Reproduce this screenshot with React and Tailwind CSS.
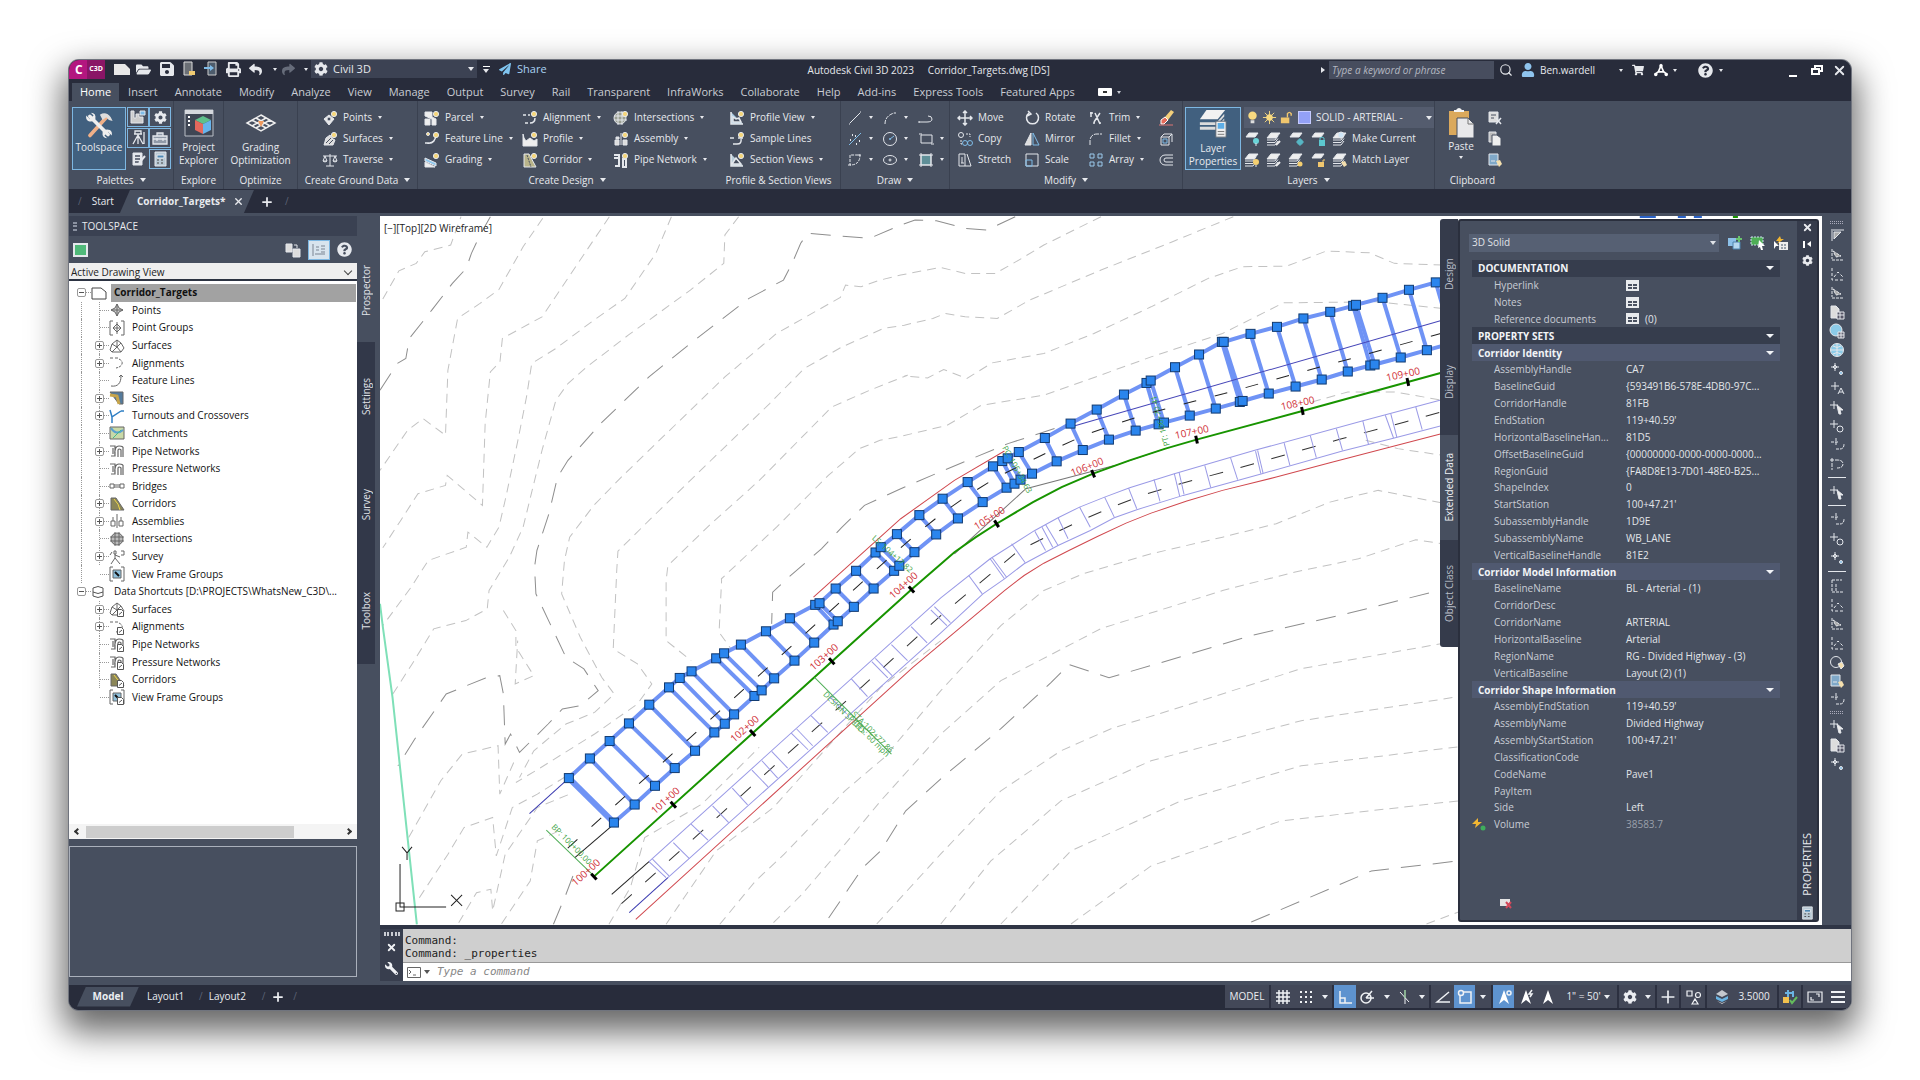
import React, { useState } from "react";
import {
  FaCog,
  FaFolderOpen,
  FaPaperPlane,
  FaPrint,
  FaQuestionCircle,
  FaReply,
  FaSave,
  FaShare,
  FaShoppingCart,
  FaUser,
  FaWrench,
} from "react-icons/fa";
import { Plus, Search, X } from "lucide-react";

const star = <circle cx="12" cy="4" r="2.6" fill="#f5d67a" />;
const badge = (
  <path d="M8.5 8.5h4l2 2v5h-6zM10 13.5l3-2.5" fill="#fff" stroke="#555" />
);
const sheets = (
  <>
    <path d="M5 2h9L10 7H1z" fill="#eee" />
    <path d="M1 9h8l3-4M1 11.500h8l3-4M1 14h8l3-4" />
  </>
);

// Small glyphs, all on a 16x16 box
const glyphs = {
  points: <><path d="M2 9l5-4 5 4-5 6z" fill="#e8e8e8" /><circle cx="7" cy="9" r="2" fill="#474f5f" />{star}</>,
  surfaces: <><path d="M2 14l2-7 4-3 3 4 2 1-2 5z" fill="#ddd" /><path d="M4 12l5-5M7 13l4-4" stroke="#474f5f" />{star}</>,
  traverse: <path d="M8 2v12M4 14h8M1 4h14M3 4L1 9h4zM13 4l-2 5h4zM1 9q2 2 4 0M11 9q2 2 4 0" />,
  parcel: <><path d="M1 2h7v5l4 2v6H8V9L1 6zM1 9h5v6H1z" fill="#eee" />{star}</>,
  featureLine: <><path d="M3 12c6 1 9-3 9-9M1 12h4M10 3h4" strokeWidth="1.500" /><circle cx="4" cy="3" r="1.500" fill="#f5d67a" />{star}</>,
  grading: <><path d="M1 6l11 5v3L1 9z" fill="#8fc8ee" /><path d="M1 10l10 5H1z" fill="#eee" />{star}</>,
  alignment: <><path d="M1 5h3M6 5h2M3 13h3M8 13q5 0 5-5" strokeWidth="1.500" />{star}</>,
  profile: <><path d="M1 3v12h14V8l-3 2-4-3-4 3-2-3z" fill="#eee" />{star}</>,
  corridor: <><path d="M2 2h5l7 13H2z" fill="#b9b48a" /><path d="M5 3l4 12" stroke="#474f5f" strokeDasharray="2 1" />{star}</>,
  intersections: <><circle cx="7" cy="8" r="6" fill="#9a9f92" /><path d="M5 1v14M9 1v14M1 6h13M1 10h13" />{star}</>,
  assembly: <><path d="M2 9h4v5H2zM8 2v12M10 9h4v5h-4zM3 6h3v2H3z" fill="#ddd" />{star}</>,
  pipe: <><path d="M1 3h5v11H2M5 6H1M10 7h3v8h-3z" strokeWidth="2" />{star}</>,
  profileView: <><path d="M2 2v12h12M4 12V7l3 2 3-1 2 4z" fill="#a9cbe4" strokeWidth="1.500" />{star}</>,
  sampleLines: <><path d="M1 7h4M9 7h5M4 13h4q5 0 4-5" strokeWidth="1.500" />{star}</>,
  sectionViews: <><path d="M2 2v12h12M3 12l4-6 5 6z" fill="#b8ccd8" strokeWidth="1.500" />{star}</>,
  line: <path d="M3 13L13 3M2 14h1M13 2h1" />,
  arc: <path d="M3 14q0-8 9-11M12 3h2" strokeDasharray="4 1" />,
  polyline: <path d="M1 12h8q5 0 5-3t-4-3M1 11v2" />,
  divide: <><path d="M2 14L14 2" stroke="#7fbce8" /><path d="M5 4h1M9 13h1M12 10h1M3 9h1M8 5h1" strokeWidth="1.800" /></>,
  circle: <><circle cx="8" cy="8" r="6.500" /><path d="M8 8l4-3M7 8h2M8 7v2" stroke="#7fbce8" /></>,
  rect: <path d="M3 4h11v8H3zM1 3h3M13 13h3" />,
  spline: <path d="M3 3v10q10 0 10-10zM1 13h4M11 3h4" strokeDasharray="3 1" />,
  ellipse: <><ellipse cx="8" cy="8" rx="6.500" ry="4.500" /><circle cx="8" cy="8" r="1" /></>,
  hatch: <><path d="M3 3h10v10H3z" fill="#5f8f98" /><path d="M1 3h14M1 13h14M3 1v14M13 1v14" /></>,
  move: <path d="M8 1v14M1 8h14M6 3l2-2 2 2M6 13l2 2 2-2M3 6L1 8l2 2M13 6l2 2-2 2" strokeWidth="1.500" />,
  copy: <><circle cx="4" cy="4" r="2.500" /><path d="M9 3h4v3M4 9v4h2" strokeDasharray="2 1" /><circle cx="8" cy="12" r="2.500" stroke="#7fbce8" /><circle cx="13" cy="12" r="2.500" stroke="#7fbce8" /></>,
  stretch: <path d="M2 2h6v12H2zM10 2l4 12H8M5 5v6M4 11h3" />,
  rotate: <path d="M5 3a6 6 0 1 0 7 0M4 1l3 3-4 2" strokeWidth="1.500" />,
  mirror: <><path d="M7 2v12H1z" fill="#ddd" /><path d="M9 2v12h6z" stroke="#7fbce8" /></>,
  scale: <><path d="M2 2h12v12H2z" /><path d="M2 8h6v6H2z" stroke="#7fbce8" /></>,
  trim: <path d="M2 3h3M7 3l5 11M12 3L6 12M3 2v5M5 13h2M11 13h2" strokeWidth="1.500" />,
  fillet: <path d="M2 14V9q1-6 7-6h5" strokeDasharray="5 1" />,
  array: <path d="M2 2h4v4H2zM10 2h4v4h-4zM2 10h4v4H2zM10 10h4v4h-4z" stroke="#9ccbee" />,
  erase: <><path d="M7 7l6-7 3 2-6 8z" fill="#f4cf7b" stroke="none" /><path d="M3 10l4-3 3 3-4 4H3z" fill="#e46b5a" stroke="#fff" /><path d="M1 15h14" stroke="#d77" /></>,
  explode: <><path d="M3 6h8v8H3zM6 3h8v8M3 6l3-3M11 6l3-3" /><path d="M5 8h4v4H5z" stroke="#7fbce8" /></>,
  offset: <path d="M15 3H7a5 5 0 0 0 0 10h8M15 6H8a2 2 0 0 0 0 4h7" />,
  bulb: <><circle cx="8" cy="6" r="4.500" fill="#f8d980" stroke="none" /><path d="M6 11h4v3H6z" fill="#ddd" stroke="none" /></>,
  sun: <><circle cx="8" cy="8" r="3.500" fill="#f8d980" stroke="none" /><path d="M8 1v14M1 8h14M3 3l10 10M13 3L3 13" stroke="#f8d980" /></>,
  unlock: <><path d="M2 8h9v6H2z" fill="#f0c66e" stroke="none" /><path d="M9 8V4q2-3 4 0v2" stroke="#f0c66e" strokeWidth="1.500" /></>,
  layerBulb: <><path d="M5 2h9l-3 4H2z" fill="#eee" /><circle cx="12" cy="10" r="3" fill="#6ad4d8" stroke="none" /><path d="M12 12v3" /></>,
  layerIso: <>{sheets}<path d="M10 14l4-4" stroke="#eee" strokeWidth="2" /></>,
  layerFreeze: <><path d="M5 2h9l-3 4H2z" fill="#eee" /><circle cx="12" cy="11" r="3" fill="#57b6c4" stroke="none" /><path d="M12 7v8M8 11h8" stroke="#57b6c4" /></>,
  layerLock: <><path d="M5 2h9l-3 4H2z" fill="#eee" /><path d="M9 9h6v6H9z" fill="#5cc8cf" stroke="none" /><path d="M10 9V7q2-2 4 0v2" stroke="#5cc8cf" /></>,
  layerCurrent: <>{sheets}<circle cx="9" cy="4" r="3" fill="#cfe6f7" /></>,
  layerOn: <>{sheets}<circle cx="12" cy="10" r="3" fill="#f5cf70" stroke="none" /><path d="M12 13v2" /></>,
  layerThaw: <>{sheets}<circle cx="12" cy="12" r="2.500" fill="#f5cf70" stroke="none" /></>,
  layerUnlock: <><path d="M5 2h9l-3 4H2z" fill="#eee" /><path d="M8 10h6v5H8z" fill="#f0c66e" stroke="none" /><path d="M13 10V8h2" stroke="#f0c66e" /></>,
  layerMatch: <>{sheets}<path d="M9 10l4-1 2 4-3 2z" fill="#f4dfae" stroke="none" /></>,
  cut: <><path d="M2 2h9v10H2z" fill="#ddd" /><path d="M4 5h5M4 8h3" stroke="#474f5f" /><path d="M9 8l5 6M14 8l-5 6" strokeWidth="1.500" /></>,
  copyClip: <><path d="M2 1h7v10H2z" fill="#bbb" /><path d="M5 4h5l4 3v8H5z" fill="#eee" stroke="#474f5f" /></>,
  pasteSpecial: <><path d="M2 2h9v11H2z" fill="#7fa8c8" /><path d="M4 9h4" /><path d="M9 9l4-1 2 4-3 3z" fill="#f4dfae" stroke="none" /></>,
  note: <><path d="M3 2h9v12H3z" fill="#e4e7ec" /><path d="M5 5h5M5 8h5M5 11h4" stroke="#474f5f" strokeWidth="1.500" /><path d="M9 12l6-7" strokeWidth="2" /></>,
  survey: <path d="M4 4h8M8 4v10M8 5L3 14M8 5l5 9M5 1h6v3H5zM14 2v12" strokeWidth="1.300" />,
  prospector: <><path d="M1 2v12h12V8H9V5H6v4H4V2z" fill="#ccc" /><path d="M10 2h5v4h-5z" fill="#7fbce8" /></>,
  toolbox: <path d="M1 6h14v8H1zM5 6V3h6v3M1 9h14M5 8v3M11 8v3" fill="#909aa8" strokeWidth="1.300" />,
  calc: <><path d="M3 1h11v14H3z" fill="#b8c8d4" /><path d="M5 4h7v3H5z" fill="#4d88b4" /><path d="M5 9h2M9 9h2M5 12h2M9 12h2" stroke="#444" /></>,
  sheet: <path d="M1 3h9l5 4v7H1z" fill="#fff" stroke="#444" />,
  tPoints: <><path d="M8 2l2 4 4 2-4 2-2 4-2-4-4-2 4-2z" fill="#ccc" /><path d="M8 2v12M2 8h12" /></>,
  tPointGroups: <path d="M4 1H1v14h3M12 1h3v14h-3M8 4l4 4-4 4-4-4zM8 2v12M4 8h8" />,
  tSurfaces: <path d="M1 12L3 6l5-4 4 3 3 5-3 4H3zM3 6l5 3 4-4M8 9l-5 5M8 9l4 5M8 2v7" />,
  tAlign: <path d="M1 3h3M6 3h3M10 4q4 2 3 5t-6 4" strokeDasharray="3 1" />,
  tFeature: <path d="M2 13c7 1 10-3 10-10M10 4l2-2 2 2" />,
  tSites: <><path d="M1 2h13v12h-4z" fill="#557b9c" /><path d="M1 5l7 1 2 8" stroke="#c7a54b" strokeWidth="3" /></>,
  tTurnouts: <path d="M3 15V9l9-6M3 9L1 2M12 3h3" stroke="#2f7fc4" strokeWidth="1.500" />,
  tCatch: <><path d="M1 2h14v12H1z" fill="#c9d9a8" /><path d="M2 3q5 8 12 2" stroke="#5aa0d0" strokeWidth="2" /><path d="M4 13l8-8" stroke="#4b8" /></>,
  tPipe: <path d="M1 3h5v10H2M6 13q-1-10 4-10t4 3v8M4 5v6M9 14V7q1-2 3 0v7" strokeWidth="1.200" />,
  tBridge: <path d="M1 6h4v4H1zM11 6h4v4h-4zM5 7h6M5 9h6" />,
  tCorridor: <><path d="M2 2h5l8 12H2z" fill="#8b8658" /><path d="M5 3q5 5 6 11" stroke="#f0d64c" /></>,
  tAssembly: <path d="M8 1v14M2 8h4v5H2zM10 8h4v5h-4zM4 4v4M12 4v4" />,
  tInter: <><circle cx="8" cy="8" r="6" fill="#bbb" /><path d="M6 1v14M10 1v14M1 6h14M1 10h14" /></>,
  tSurvey: <path d="M5 2h2v3H5zM6 5v4L2 15M6 9l5 6M6 6l5 2M12 2h3v4h-3M3 3L1 6" />,
  tFrame: <><path d="M4 1H1v14h3M12 1h3v14h-3" /><path d="M4 4h8v8H4z" fill="#8fc1dd" /><path d="M6 6l4 4" stroke="#111" strokeWidth="2" /></>,
  tData: <path d="M2 4q5-3 10 0v8q-5 3-10 0zM2 8q5 3 10 0" />,
  squad: <><path d="M1 2h6v8H1z" fill="#ddd" /><path d="M8 7h7v8H8z" fill="#ddd" /><path d="M9 3h3v3" /></>,
  grip: <path d="M2 2h13M3 3v10M5 4v7l7-7z" fill="#aaa" />,
  gripB: <path d="M3 2v10M3 13h12M4 4l8 5-5 1z" fill="#aaa" strokeDasharray="3 1" />,
  pageGrid: <><path d="M2 2h5l3 3v9H2z" fill="#ddd" /><path d="M8 8h7v7H8zM8 11h7M11 8v7" fill="#556" /></>,
  globe: <><circle cx="8" cy="8" r="6.500" fill="#8ccbe8" /><path d="M2 8h12M8 2v12M4 4q4 3 8 0M4 12q4-3 8 0" /></>,
  globeGrid: <><circle cx="7" cy="7" r="6" fill="#8ccbe8" /><path d="M9 9h6v6H9zM9 12h6M12 9v6" fill="#667" /></>,
  node: <><path d="M6 2v8M2 6h8M6 4l2 2-2 2-2-2z" /><circle cx="12" cy="12" r="1.500" fill="#7fbce8" /></>,
  nodeA: <path d="M6 2v8M2 6h8M9 14l3-6 3 6M10 12h4" />,
  nodeCursor: <><path d="M5 2v8M1 6h8" /><path d="M8 6l6 5-3 0 1 4-2 0-1-4z" fill="#eee" /></>,
  nodeZoom: <><path d="M5 2v8M1 6h8" /><circle cx="11" cy="11" r="3" /></>,
  hook: <path d="M3 2v12M1 4h7q6 0 6 4t-6 4" strokeDasharray="4 1" />,
  hookDots: <path d="M7 1v8M2 5h8M7 12h4q4 0 4-5" strokeDasharray="3 1" />,
  slope: <path d="M3 2v12h12M5 11l4-5 5 5" strokeDasharray="3 2" />,
  squareDots: <path d="M3 2h10M3 2v12h11M7 6v8" strokeDasharray="3 1" />,
  roundPen: <><circle cx="7" cy="8" r="5.500" /><path d="M9 10l4-2 2 4-3 3z" fill="#f4dfae" /></>,
};

function Glyph({ name, className = "h-4 w-4", color = "#e4e7ec" }) {
  return (
    <svg
      viewBox="0 0 16 16"
      className={`${className} shrink-0`}
      fill="none"
      stroke={color}
      aria-hidden="true"
    >
      {glyphs[name]}
    </svg>
  );
}

function Caret({ className = "border-x-[3px] border-t-[4px]" }) {
  return (
    <span
      className={`${className} inline-block h-0 w-0 shrink-0 border-x-transparent border-t-current`}
    />
  );
}

const menuTabs = [
  "Home", "Insert", "Annotate", "Modify", "Analyze", "View", "Manage", "Output", "Survey",
  "Rail", "Transparent", "InfraWorks", "Collaborate", "Help", "Add-ins", "Express Tools",
  "Featured Apps",
];

function TitleBar() {
  return (
    <header className="flex h-[23px] shrink-0 items-start bg-[#282c3b] text-[10px] text-[#e6e8ec]">
      <div className="flex h-[19px] w-[36px] items-center rounded-tl-lg bg-[#b3167f] text-white">
        <b className="pl-[6px] text-[12px]">C</b>
        <span className="ml-auto flex h-full w-[18px] items-center justify-center bg-[#8a1566] text-[7px] font-bold">
          C3D
        </span>
      </div>
      <div className="ml-[9px] flex h-[18px] items-center text-[15px]">
        <button className="w-[22px]" aria-label="New">
          <svg viewBox="0 0 16 16" className="h-4 w-4">
            <path d="M0 3h11l5 5v6H0z" fill="#e8e8e8" />
          </svg>
        </button>
        <button className="w-[23px]" aria-label="Open"><FaFolderOpen /></button>
        <button className="w-[22px] text-[16px]" aria-label="Save"><FaSave /></button>
        <button className="w-[23px]" aria-label="Open from web">
          <svg viewBox="0 0 16 16" className="h-4 w-4">
            <path d="M3 1h8v13H3z" fill="#6b6f75" stroke="#ddd" />
            <path d="M8 10h6v4H8z" fill="#efcb72" />
          </svg>
        </button>
        <button className="w-[22px]" aria-label="Save to web">
          <svg viewBox="0 0 16 16" className="h-4 w-4">
            <path d="M4 1h8v13H4z" fill="#4d5c6c" stroke="#ccc" />
            <path d="M0 6h6V4l4 3-4 3V8H0z" fill="#7fbce8" />
          </svg>
        </button>
        <button className="w-[23px]" aria-label="Plot"><FaPrint /></button>
        <button className="w-[18px] text-[13px]" aria-label="Undo"><FaReply /></button>
        <button className="w-[15px]" aria-label="Undo list"><Caret className="mb-1 border-x-[2px] border-t-[3px]" /></button>
        <button className="w-[18px] text-[13px] text-[#666c7a]" aria-label="Redo"><FaShare /></button>
        <button className="w-[11px]" aria-label="Redo list"><Caret className="mb-1 border-x-[2px] border-t-[3px]" /></button>
      </div>
      <button className="flex h-[18px] w-[166px] items-center bg-[#3c4253] px-[3px] text-[11px]">
        <FaCog className="text-[14px]" />
        <span className="ml-[5px] flex-1 text-left">Civil 3D</span>
        <Caret />
      </button>
      <button className="flex h-[18px] w-[18px] flex-col items-center justify-center gap-[2px]" aria-label="Customize">
        <span className="h-px w-[7px] bg-white" />
        <Caret />
      </button>
      <button className="ml-[4px] flex h-[18px] items-center gap-[6px] text-[11px] text-[#a9d2f3]">
        <FaPaperPlane className="text-[12px] text-[#7fc4ef]" />
        Share
      </button>
      <div className="ml-[261px] flex h-[20px] items-center gap-[14px] whitespace-nowrap">
        <span>Autodesk Civil 3D 2023</span>
        <span>Corridor_Targets.dwg [DS]</span>
      </div>
      <div className="ml-auto flex h-[20px] items-center">
        <span className="mr-[4px] h-0 w-0 border-y-[3px] border-l-[4px] border-y-transparent border-l-current" />
        <input
          aria-label="Search help"
          placeholder="Type a keyword or phrase"
          className="h-[18px] w-[165px] bg-[#474d5e] px-[3px] text-[10px] italic placeholder:text-[#b4b8c1]"
        />
        <button className="w-[24px]" aria-label="Search"><Search className="mx-auto h-[14px] w-[14px]" /></button>
        <FaUser className="mr-[5px] ml-[3px] text-[14px] text-[#8fc4ee]" />
        <button className="w-[92px] text-left">Ben.wardell<Caret className="ml-[24px] mb-[2px] border-x-[2px] border-t-[3px]" /></button>
        <button className="w-[22px]" aria-label="App store"><FaShoppingCart className="text-[12px]" /></button>
        <button className="flex w-[36px] items-center gap-[5px]" aria-label="Autodesk apps">
          <svg viewBox="0 0 16 16" className="h-[14px] w-[14px]" fill="none" stroke="#fff" strokeWidth="2">
            <path d="M8 3L5 10h6zM1 13l4-3M15 13l-4-3" />
            <circle cx="8" cy="3" r="2" fill="#fff" stroke="none" />
            <circle cx="2" cy="13" r="2" fill="#fff" stroke="none" />
            <circle cx="14" cy="13" r="2" fill="#fff" stroke="none" />
          </svg>
          <Caret className="border-x-[2px] border-t-[3px]" />
        </button>
        <button className="mr-[58px] ml-[8px] flex items-center gap-[6px]" aria-label="Help">
          <FaQuestionCircle className="text-[15px]" />
          <Caret className="border-x-[2px] border-t-[3px]" />
        </button>
        <button className="flex h-[14px] w-[24px] items-end justify-center" aria-label="Minimize"><span className="h-[2px] w-[8px] bg-white" /></button>
        <button className="w-[23px]" aria-label="Restore">
          <svg viewBox="0 0 12 12" className="mx-auto h-3 w-3" fill="none" stroke="#fff" strokeWidth="2">
            <path d="M4 4V2h7v5H9M1 5h7v5H1z" />
          </svg>
        </button>
        <button className="mr-px w-[22px]" aria-label="Close"><X className="mx-auto h-[15px] w-[15px]" strokeWidth={3} /></button>
      </div>
    </header>
  );
}

function Panel({ label, caret, className, children }) {
  return (
    <section className={`flex shrink-0 flex-col border-r border-[#3a4150] pt-[6px] ${className}`}>
      <div className="flex flex-1">{children}</div>
      <h2 className="flex h-[18px] items-center justify-center gap-[6px]">
        {label}
        {caret && <Caret />}
      </h2>
    </section>
  );
}

function Tools({ items, className }) {
  return (
    <div className={`flex flex-col ${className}`}>
      {items.map(([glyph, label, caret]) => (
        <button
          key={glyph}
          aria-label={label || glyph}
          className="flex h-[21px] items-center gap-[4px] whitespace-nowrap"
        >
          <Glyph name={glyph} />
          {label && <span className="ml-px">{label}</span>}
          {caret && <Caret className="ml-[2px] border-x-[2px] border-t-[3px]" />}
        </button>
      ))}
    </div>
  );
}

function Ribbon() {
  const small = "flex h-[20px] w-[22px] items-center justify-center";
  return (
    <div className="flex h-[88px] shrink-0 overflow-hidden bg-[#474f5f] text-[10px] text-[#e8eaee]">
      <Panel label="Palettes" caret className="w-[105px]">
        <div className="ml-[3px] flex gap-px">
          <button className="flex h-[63px] w-[54px] flex-col items-center border border-[#7db7e2] bg-[#41607f] pt-[3px]">
            <svg viewBox="0 0 32 32" className="h-[29px] w-[32px]" fill="none" strokeLinecap="round">
              <path d="M25 6L6 27" stroke="#f0b088" strokeWidth="4" />
              <path d="M17 4q7-4 12 3l2 4-4-1-3-3-4 3z" fill="#ddd" />
              <path d="M6 6l20 20" stroke="#eee" strokeWidth="4" />
              <path d="M2 5l4 4 4-4-3-3q6 0 5 7-3 4-8 2-3-2-2-6zM30 27l-4-4-4 4 3 3q-6 0-5-7 3-4 8-2 3 2 2 6z" fill="#eee" />
            </svg>
            Toolspace
          </button>
          <div className="grid grid-cols-2 content-start gap-y-px">
            <button aria-label="Prospector" className={`${small} border border-[#7db7e2]`}><Glyph name="prospector" /></button>
            <button aria-label="Settings" className={`${small} border border-[#7db7e2]`}><FaCog className="text-[13px]" /></button>
            <button aria-label="Survey" className={`${small} border border-[#7db7e2]`}><Glyph name="survey" /></button>
            <button aria-label="Toolbox" className={`${small} border border-[#7db7e2]`}><Glyph name="toolbox" /></button>
            <button aria-label="Panorama" className={small}><Glyph name="note" /></button>
            <button aria-label="Properties" className={`${small} border border-[#7db7e2]`}><Glyph name="calc" /></button>
          </div>
        </div>
      </Panel>
      <Panel label="Explore" className="w-[50px]">
        <button className="flex w-full flex-col items-center pt-[2px] leading-[13px]">
          <svg viewBox="0 0 30 28" className="mb-[4px] h-[28px] w-[30px]">
            <path d="M1 1h28v26H1z" fill="#3f4654" stroke="#b9bec6" />
            <path d="M1 1h28v4H1z" fill="#d5d8dd" />
            <path d="M4 8h2M4 12h2M4 16h2" stroke="#fff" strokeWidth="2" />
            <path d="M11 11l8-4 8 4-8 4z" fill="#5fc08c" />
            <path d="M11 11l8 4v10l-8-4z" fill="#e4685c" />
            <path d="M27 11l-8 4v10l8-4z" fill="#67b4ec" />
          </svg>
          Project
          <br />
          Explorer
        </button>
      </Panel>
      <Panel label="Optimize" className="w-[74px]">
        <button className="flex w-full flex-col items-center pt-[2px] leading-[13px]">
          <svg viewBox="0 0 32 28" className="mb-[4px] h-[28px] w-[32px]" fill="none" stroke="#eee" strokeWidth="1.500">
            <path d="M16 6l14 8-14 8-14-8zM11 9l14 8M7 11l14 8M21 9L7 17M25 11l-14 8" />
            <path d="M13 12h6l-3 6z" fill="#f09a5e" stroke="none" />
          </svg>
          Grading
          <br />
          Optimization
        </button>
      </Panel>
      <Panel label="Create Ground Data" caret className="w-[120px]">
        <Tools className="ml-[24px]" items={[["points", "Points", 1], ["surfaces", "Surfaces", 1], ["traverse", "Traverse", 1]]} />
      </Panel>
      <Panel label="Create Design" caret className="w-[299px] border-transparent">
        <Tools className="ml-[6px] w-[98px]" items={[["parcel", "Parcel", 1], ["featureLine", "Feature Line", 1], ["grading", "Grading", 1]]} />
        <Tools className="w-[91px]" items={[["alignment", "Alignment", 1], ["profile", "Profile", 1], ["corridor", "Corridor", 1]]} />
        <Tools items={[["intersections", "Intersections", 1], ["assembly", "Assembly", 1], ["pipe", "Pipe Network", 1]]} />
      </Panel>
      <Panel label="Profile & Section Views" className="w-[124px]">
        <Tools className="ml-[12px]" items={[["profileView", "Profile View", 1], ["sampleLines", "Sample Lines"], ["sectionViews", "Section Views", 1]]} />
      </Panel>
      <Panel label="Draw" caret className="w-[109px]">
        <Tools className="ml-[6px] w-[35px]" items={[["line", "", 1], ["divide", "", 1], ["spline", "", 1]]} />
        <Tools className="w-[36px]" items={[["arc", "", 1], ["circle", "", 1], ["ellipse", "", 1]]} />
        <Tools items={[["polyline"], ["rect", "", 1], ["hatch", "", 1]]} />
      </Panel>
      <Panel label="Modify" caret className="w-[233px]">
        <Tools className="ml-[7px] w-[67px]" items={[["move", "Move"], ["copy", "Copy"], ["stretch", "Stretch"]]} />
        <Tools className="w-[64px]" items={[["rotate", "Rotate"], ["mirror", "Mirror"], ["scale", "Scale"]]} />
        <Tools className="w-[70px]" items={[["trim", "Trim", 1], ["fillet", "Fillet", 1], ["array", "Array", 1]]} />
        <Tools items={[["erase"], ["explode"], ["offset"]]} />
      </Panel>
      <Panel label="Layers" caret className="w-[252px]">
        <button className="ml-[2px] flex h-[63px] w-[56px] flex-col items-center border border-[#7db7e2] bg-[#41607f] pt-px leading-[13px]">
          <svg viewBox="0 0 32 32" className="mb-[3px] h-[30px] w-[32px]">
            <path d="M9 1h20l-8 10H2z" fill="#f2f2f2" />
            <path d="M2 14h18l8-9v3l-8 9H2zM2 19h18l8-9v3l-8 9H2z" fill="#dcdcdc" />
            <path d="M19 13h11v17H19z" fill="#eee" stroke="#5b6470" />
            <path d="M21 15h7v6h-7z" fill="#5eaee6" />
            <path d="M21 24h7M21 27h7" stroke="#777" />
          </svg>
          Layer
          <br />
          Properties
        </button>
        <div className="ml-[3px] flex flex-col">
          <button className="flex h-[21px] w-[190px] items-center gap-[2px] bg-[#545c6e] pr-[2px] pl-px">
            <Glyph name="bulb" className="h-[15px] w-[15px]" />
            <Glyph name="sun" className="h-[15px] w-[15px]" />
            <Glyph name="unlock" className="h-[15px] w-[15px]" />
            <span className="ml-[2px] h-[13px] w-[13px] border border-[#c5cbff] bg-[#93a1f7]" />
            <span className="ml-[3px] flex-1 text-left whitespace-nowrap">SOLID - ARTERIAL -</span>
            <Caret />
          </button>
          <div className="flex h-[21px] items-center gap-[6px]">
            <Glyph name="layerBulb" /><Glyph name="layerIso" /><Glyph name="layerFreeze" /><Glyph name="layerLock" />
            <button className="flex items-center gap-[4px] whitespace-nowrap"><Glyph name="layerCurrent" />Make Current</button>
          </div>
          <div className="flex h-[21px] items-center gap-[6px]">
            <Glyph name="layerOn" /><Glyph name="layerIso" /><Glyph name="layerThaw" /><Glyph name="layerUnlock" />
            <button className="flex items-center gap-[4px] whitespace-nowrap"><Glyph name="layerMatch" />Match Layer</button>
          </div>
        </div>
      </Panel>
      <Panel label="Clipboard" className="w-[76px] border-transparent">
        <button className="ml-[8px] flex w-[36px] flex-col items-center">
          <svg viewBox="0 0 28 32" className="h-[32px] w-[28px]">
            <path d="M2 4h20v24H2z" fill="#dba95c" />
            <path d="M7 5h10V3h-2q-3-4-6 0H7z" fill="#f4f4f4" />
            <path d="M10 11h11l6 6v14H10z" fill="#e8e8ea" stroke="#474f5f" />
            <path d="M21 11v6h6" fill="none" stroke="#777" />
          </svg>
          Paste
          <Caret className="mt-[2px] border-x-[2px] border-t-[3px]" />
        </button>
        <Tools className="ml-[8px]" items={[["cut"], ["copyClip"], ["pasteSpecial"]]} />
      </Panel>
    </div>
  );
}

function DocumentTabs() {
  return (
    <nav className="flex h-[24px] shrink-0 items-center bg-[#282c3b] pt-px text-[10px] text-[#e8eaee]">
      <span className="ml-[9px] text-[#5c6374]">/</span>
      <button className="ml-[10px]">Start</button>
      <div className="ml-[6px] flex h-[23px] w-[134px] items-center bg-[#474f5f] pl-[17px] [clip-path:polygon(10px_0,100%_0,calc(100%-10px)_100%,0_100%)]">
        <button className="font-bold">Corridor_Targets*</button>
        <button aria-label="Close drawing" className="ml-[7px]"><X className="h-[11px] w-[11px]" strokeWidth={3} /></button>
      </div>
      <button aria-label="New drawing" className="ml-[6px]"><Plus className="h-[14px] w-[14px]" strokeWidth={3} /></button>
      <span className="ml-[11px] text-[#5c6374]">/</span>
    </nav>
  );
}

// glyph, label, expandable
const drawingItems = [
  ["tPoints", "Points"],
  ["tPointGroups", "Point Groups"],
  ["tSurfaces", "Surfaces", 1],
  ["tAlign", "Alignments", 1],
  ["tFeature", "Feature Lines"],
  ["tSites", "Sites", 1],
  ["tTurnouts", "Turnouts and Crossovers", 1],
  ["tCatch", "Catchments"],
  ["tPipe", "Pipe Networks", 1],
  ["tPipe", "Pressure Networks"],
  ["tBridge", "Bridges"],
  ["tCorridor", "Corridors", 1],
  ["tAssembly", "Assemblies", 1],
  ["tInter", "Intersections"],
  ["tSurvey", "Survey", 1],
  ["tFrame", "View Frame Groups"],
];
const shortcutItems = [
  ["tSurfaces", "Surfaces", 1],
  ["tAlign", "Alignments", 1],
  ["tPipe", "Pipe Networks"],
  ["tPipe", "Pressure Networks"],
  ["tCorridor", "Corridors"],
  ["tFrame", "View Frame Groups"],
];

function Expander({ open }) {
  return (
    <span className="relative h-[9px] w-[9px] shrink-0 rounded-[2px] border border-[#9a9a9a] bg-white">
      <span className="absolute top-[3px] left-px h-px w-[5px] bg-[#555]" />
      {!open && <span className="absolute top-px left-[3px] h-[5px] w-px bg-[#555]" />}
    </span>
  );
}

function RootNode({ glyph, label, selected }) {
  return (
    <li className="flex items-center">
      <span className="ml-[8px] flex"><Expander open /></span>
      <span className="w-[5px] border-t border-dotted border-[#999]" />
      <Glyph name={glyph} color="#555" />
      <span
        className={`ml-[4px] flex flex-1 items-center self-stretch truncate pl-[3px] ${
          selected ? "bg-[#a2a2a2] font-bold" : ""
        }`}
      >
        {label}
      </span>
    </li>
  );
}

function ChildNode({ item, inner, last, shared }) {
  const [glyph, label, expandable] = item;
  return (
    <li className="flex items-center">
      <span className={`ml-[12px] w-[18px] self-stretch border-l border-dotted ${inner ? "border-[#999]" : "border-transparent"}`} />
      <span className={`flex w-[10px] items-center self-stretch border-l border-dotted ${last ? "border-transparent" : "border-[#999]"}`}>
        {expandable && <span className="-ml-[5px] flex"><Expander /></span>}
        <span className="flex-1 border-t border-dotted border-[#999]" />
      </span>
      <span className="relative flex">
        <Glyph name={glyph} color="#666" />
        {shared && (
          <svg viewBox="0 0 16 16" className="absolute inset-0 h-4 w-4">{badge}</svg>
        )}
      </span>
      <span className="ml-[7px]">{label}</span>
    </li>
  );
}

function Toolspace() {
  const [tab, setTab] = useState("Prospector");
  return (
    <aside className="flex w-[311px] shrink-0 bg-[#474f5f] text-[10px]">
      <div className="flex w-[288px] flex-col">
        <div className="flex h-[20px] items-center gap-[5px] bg-[#3a4152] pl-[4px] text-[#e8eaee]">
          <span className="h-[9px] w-[4px] border-x-2 border-dotted border-[#8a91a0]" />
          TOOLSPACE
        </div>
        <div className="flex h-[27px] items-center pr-[5px] pl-[4px]">
          <button aria-label="Drawing" className="h-[14px] w-[15px] border-2 border-[#e4e8ec] bg-[#4fb979]" />
          <button aria-label="Panorama" className="ml-auto"><Glyph name="squad" /></button>
          <button aria-label="Preview" className="ml-[7px] flex h-[20px] w-[22px] items-center justify-center border border-[#7db7e2] bg-[#d8e4ee]">
            <svg viewBox="0 0 16 16" className="h-4 w-4" fill="none" stroke="#7b8492">
              <path d="M2 2v12M5 5h3M5 8h3M10 4h4M10 7h4M10 10h4M4 12h10" />
            </svg>
          </button>
          <button aria-label="Help" className="ml-[7px]"><FaQuestionCircle className="text-[15px] text-[#e6e9ee]" /></button>
        </div>
        <select
          aria-label="View"
          className="h-[18px] w-full appearance-none bg-[#efefef] pl-[2px] text-[10px] text-[#222]"
        >
          <option>Active Drawing View</option>
        </select>
        <div className="-mt-[13px] mb-[5px] mr-[6px] ml-auto h-[6px] w-[6px] rotate-45 border-r border-b border-[#444]" />
        <div className="flex flex-1 flex-col border-t-2 border-[#2c3342] bg-white">
          <ul className="mt-[3px] grid h-[422px] auto-rows-fr pr-px text-[#111]">
            <RootNode glyph="sheet" label="Corridor_Targets" selected />
            {drawingItems.map((item, i) => (
              <ChildNode key={item[1]} item={item} inner last={i === drawingItems.length - 1} />
            ))}
            <RootNode glyph="tData" label="Data Shortcuts [D:\PROJECTS\WhatsNew_C3D\..." />
            {shortcutItems.map((item, i) => (
              <ChildNode key={item[1]} item={item} shared last={i === shortcutItems.length - 1} />
            ))}
          </ul>
          <div className="mt-auto flex h-[15px] items-center bg-[#f4f4f4] px-[6px] text-[#333]">
            <span className="h-[5px] w-[5px] rotate-45 border-b-2 border-l-2 border-[#333]" />
            <span className="ml-[6px] h-[12px] w-[208px] bg-[#cdcdcd]" />
            <span className="ml-auto h-[5px] w-[5px] rotate-45 border-t-2 border-r-2 border-[#333]" />
          </div>
        </div>
        <div className="mt-[7px] mb-[8px] h-[131px] border border-[#aab0bb]" />
      </div>
      <div className="flex h-[448px] w-[18px] flex-col bg-[#323849] text-[#e0e3e8]">
        {[["Prospector", "h-[126px]"], ["Settings", "h-[110px]"], ["Survey", "h-[106px]"], ["Toolbox", "h-[106px]"]].map(([name, size]) => (
          <button
            key={name}
            onClick={() => setTab(name)}
            className={`${size} flex items-center justify-center ${tab === name ? "bg-[#474f5f] pt-[24px]" : ""}`}
          >
            <span className="rotate-180 [writing-mode:vertical-rl]">{name}</span>
          </button>
        ))}
      </div>
    </aside>
  );
}

const sheet = (ox, oy, kx, ky = 3) => (list) =>
  list.split(" ").map((pair) => {
    const [x, y] = pair.split(",").map(Number);
    return [Math.round((ox + x / kx) * 10) / 10, Math.round((oy + y / ky) * 10) / 10];
  });
const north = sheet(380, 210, 2.904);
const east = sheet(900, 210, 2.8);
const south = sheet(380, 560, 2.8);
const site = sheet(0, 0, 1, 1);

const minorContours = [
  north("8,267 55,182 105,160 130,125 205,105 235,20"),
  north("472,25 415,110 345,238 290,280 225,325 197,480 190,675 125,625 80,660 40,720 0,780"),
  north("665,20 600,120 470,320 355,385 348,455 320,485 305,640 297,885 195,795 190,825 110,850 60,930 8,1012"),
  north("845,20 800,130 710,265 620,330 510,415 440,460 425,560 400,690 365,860 345,950 310,1010 255,965 250,1010 140,1050 90,1130 8,1245"),
  [...north("1040,20 1000,75 997,160 900,240 720,375 600,470 545,520 510,570 470,720 415,950 375,1040"), ...south("305,90 300,145 240,180 150,205 90,310 30,410")],
  [...east("560,20 400,105 330,150 265,190 180,190 110,172 0,195"), ...north("1450,210 1395,230 1350,225 1335,262 1150,370 1000,500 850,650 700,800 620,885 550,980 535,1050"), ...south("508,100 560,230 620,350 655,400 600,455 520,490 430,570 390,650")],
  [...east("930,20 760,95 560,180 360,270 270,325 180,320 125,310 90,325 10,345"), ...north("1460,355 1340,410 1230,475 1130,580 900,810 790,920 690,1022"), ...south("662,30 652,265 720,310 760,370 720,430 600,520 450,620 380,665")],
  [...east("1515,165 1380,160 1310,128 1190,123 1080,168 955,170 860,205 700,290 540,370 400,430 255,458 185,505 120,478 75,503 10,497"), ...north("1530,495 1420,540 1310,590 1100,810 960,940 835,1065"), ...south("800,60 800,240 870,300")],
  [...east("1515,295 1330,275 1070,278 900,370 700,440 545,500 400,555 225,585 130,645 0,678"), ...north("1450,690 1390,715 1300,795 1150,950 990,1105"), ...south("955,60 948,215 985,270")],
  east("1150,575 1250,545 1380,545 1515,570"),
  east("1300,690 1390,715 1515,735"),
  [...south("950,1090 1050,960 1130,880 1300,690 1410,590"), ...site("940,690 1000,625"), ...east("400,1140 510,1090 700,1030 900,980 1050,940 1200,875 1335,840 1515,878")],
  [...south("1100,1085 1180,1000 1300,850 1400,720 1568,520"), ...site("1000,680 1100,628"), ...east("900,1140 1100,1085 1280,1045 1440,988 1515,1000")],
  south("345,150 380,210 380,260 430,345 378,370 385,240"),
  south("80,830 170,660 230,580 330,555 335,700 380,590"),
  south("110,1010 190,880 235,800 315,770 325,885 370,740 440,700 560,620"),
  south("220,1085 270,995 310,985 315,1050 350,880 440,740 530,700"),
  south("340,1088 420,960 440,840 500,810"),
  south("640,1090 700,980 740,830 900,730 1060,560"),
  south("800,1090 850,1010 940,870 1100,740 1250,560 1400,380 1568,240"),
  site("876,923 940,853 1000,790 1060,750 1110,728 1200,700 1300,668 1457,640"),
  site("940,923 990,860 1060,800 1150,760 1300,720 1457,696"),
  site("1000,923 1070,850 1180,800 1300,765 1457,746"),
  site("1070,923 1150,865 1280,820 1457,800"),
  site("1425,923 1457,911"),
];
const majorContours = [
  north("0,540 50,460 75,445 85,385 150,300 210,220 250,175 265,130 290,75 320,20"),
  [...east("320,20 242,60 180,55 100,32 40,30"), ...north("1510,45 1420,85 1330,78 1240,70 1220,100 1195,160 1170,210 1070,265 900,400 780,500 640,640 545,750 515,800 490,910 455,1020"), ...south("432,20 436,100 520,290 570,325 610,390 560,435 510,445 470,490 390,575 365,520 350,550 345,400 335,345 295,352 185,400 100,530 50,615")],
  [...east("430,655 300,700 120,780 0,835"), ...north("1405,885 1340,950 1280,1015 1180,1105"), ...south("1098,95 1095,190")],
  south("485,1090 520,1000 545,930"),
  site("828,917 862,867 880,850 905,810 940,778 1000,728 1050,682 1068,664 1108,677 1160,662 1250,635 1350,612 1457,585"),
  site("1250,921 1300,900 1370,870 1457,860"),
];

// Matching top and bottom grips of every selected corridor slice
const grips = [
  [south, "528,652 587,593 642,541 696,488 753,432 808,380 838,352 871,332 940,293 962,278 1009,252 1079,212 1146,173 1217,133 1229,128 1274,84 1331,31",
    "654,785 712,731 769,675 824,622 881,570 935,515 964,489 990,461 1047,406 1067,389 1102,353 1159,300 1214,246 1268,192 1280,182 1325,139 1380,84"],
  [north, "1437,1026 1452,1010 1499,971", "1491,1081 1506,1066 1550,1025"],
  [east, "52,914 117,865 187,815 258,768 284,752 299,744 330,725 403,683 475,640 548,598 624,553 687,518 699,511 767,471 834,433 898,395 903,395 978,371 1052,350 1126,325 1201,305 1265,287 1273,284 1347,263 1421,239 1496,217 1570,196",
    "99,972 160,924 229,875 296,832 318,820 335,808 367,790 436,753 509,719 582,688 657,661 721,642 736,637 808,616 881,595 948,575 956,572 1029,550 1104,529 1177,508 1250,484 1313,466 1325,463 1398,442 1471,420 1545,398 1620,378"],
];
const topGrips = grips.flatMap(([place, top]) => place(top));
const bottomGrips = grips.flatMap(([place, , bottom]) => place(bottom));

const laneLines = [
  ...["752,902 800,950", "762,895 808,945", "820,845 865,893", "870,790 917,838", "930,735 975,785", "985,682 1028,732",
    "1040,628 1085,678", "1068,600 1112,652", "1095,572 1140,622", "1150,517 1197,567", "1165,505 1210,555", "1205,465 1252,515",
    "1260,410 1305,460", "1318,355 1363,408", "1375,303 1420,352", "1385,293 1432,345", "1430,252 1475,300", "1485,198 1530,247",
    "1540,148 1585,195", "1550,138 1595,186"].map(south),
  ...["190,1095 228,1150", "250,1045 290,1105", "256,1042 296,1100", "310,1000 348,1057", "375,962 405,1020", "395,950 425,1010",
    "405,942 440,1005", "440,922 468,985", "500,890 530,950", "570,860 597,920", "637,833 660,895", "708,807 725,873", "765,790 780,858",
    "778,785 792,852", "850,765 867,832", "922,742 942,808", "992,722 1007,790", "998,720 1013,788", "1072,698 1088,765",
    "1145,675 1162,742", "1218,655 1235,720", "1292,632 1308,702", "1355,615 1378,683", "1370,610 1387,680", "1440,590 1458,658"].map(east),
];
const upperLaneEdge = [...south("752,902 1568,112"), ...east("250,1045 375,960 440,922 500,890 570,860 640,832 765,790 990,720 1290,632 1560,555")];
const lowerLaneEdge = [...south("805,950 1568,217"), ...east("230,1150 290,1105 345,1060 440,1005 530,960 597,922 660,898 790,855 1010,790 1235,722 1380,683 1560,633")];
const laneCentre = [...south("675,1028 1568,165"), ...east("330,1020 425,970 505,930 590,890 675,855 765,825 965,767 1230,686 1410,635 1560,590")];
const widenedCentre = [...south("525,862 1405,10"), ...east("50,965 120,905 195,850 270,800 355,755 438,712 520,672 605,640 697,608 820,573 905,550 1078,498 1260,445 1433,393 1560,355")];
const baseline = [...south("598,947 1486,87"), ...east("150,1025 210,980 268,940 370,875 450,830 538,790 640,750 740,715 827,688 1123,602 1418,515 1560,473")];
const outerEdge = [...south("715,1075 1490,320"), ...east("290,1140 345,1095 400,1058 470,1020 550,978 630,938 700,908 800,872 900,840 1050,800 1200,757 1560,657")];
const innerEdge = [...south("1212,110"), ...east("0,925 150,810 290,722")];
const stations = [
  ["100+00", south("598,947"), -42], ["101+00", south("820,732"), -42], ["102+00", south("1042,517"), -42],
  ["103+00", south("1263,302"), -42], ["104+00", south("1486,87"), -42], ["105+00", east("268,940"), -32],
  ["106+00", east("538,790"), -22], ["107+00", east("827,688"), -12], ["108+00", east("1123,602"), -12],
  ["109+00", east("1418,515"), -12],
];
const callouts = [
  ["BP: 100+00.00", south("478,800"), 45],
  ["DESIGN SPEED", south("1238,402"), 45],
  ["STA:102+77.86", south("1318,462"), 45],
  ["DES: 60 mph", south("1322,490"), 45],
  ["LS: 104+17.82", north("1425,985"), 42],
  ["PC: 105+34.63", east("283,712"), 61],
  ["PT: 106+70.41", east("752,705"), -105],
];

const Line = ({ points, ...rest }) => (
  <polyline points={points.map((p) => p.join(",")).join(" ")} fill="none" {...rest} />
);

function Drawing() {
  return (
    <svg
      viewBox="380 216 1442 708"
      preserveAspectRatio="xMinYMin slice"
      className="h-full w-full bg-white font-['Open_Sans',sans-serif]"
      role="img"
      aria-label="Corridor plan"
    >
      {minorContours.map((points, i) => (
        <Line key={i} points={points} stroke="#c2c2c2" strokeDasharray="9 6" />
      ))}
      {majorContours.map((points, i) => (
        <Line key={i} points={points} stroke="#8e8e8e" strokeDasharray="20 12" />
      ))}
      <Line points={south("0,130 8,200 35,410 103,1090")} stroke="#7fe0b8" strokeWidth="2" />

      <Line points={laneCentre} stroke="#333" strokeDasharray="14 18" />
      {laneLines.map((points, i) => (
        <Line key={i} points={points} stroke="#9a9ae6" />
      ))}
      <Line points={upperLaneEdge} stroke="#9a9ae6" />
      <Line points={lowerLaneEdge} stroke="#9a9ae6" />
      <Line points={outerEdge} stroke="#d0484e" />
      <Line points={innerEdge} stroke="#d0484e" />
      <Line points={south("648,1000 752,902")} stroke="#222" />
      <Line points={south("697,1055 805,950")} stroke="#3a3ab0" />
      <Line points={south("418,758 528,652")} stroke="#3a3ab0" />
      <Line points={south("545,890 654,790")} stroke="#222" />

      {topGrips.map((top, i) => (
        <Line key={i} points={[top, bottomGrips[i]]} stroke="#6f93f5" strokeWidth={i === 0 ? 6 : 4} />
      ))}
      <Line points={topGrips} stroke="#6f93f5" strokeWidth="4" />
      <Line points={bottomGrips} stroke="#6f93f5" strokeWidth="4" />
      <Line points={widenedCentre} stroke="#222" strokeDasharray="13 19" />
      <Line points={east("475,650 1560,316")} stroke="#4646b8" />
      <Line points={east("150,1030 350,835 600,765 740,715")} stroke="#777" />
      {[...topGrips, ...bottomGrips].map(([x, y], i) => (
        <rect key={i} x={x - 4.5} y={y - 4.5} width="9" height="9" fill="#2a85ee" stroke="#123a70" />
      ))}

      <Line points={baseline} stroke="#189400" strokeWidth="2" />
      <Line points={south("1215,350 1430,580")} stroke="#4fae57" />
      <Line points={south("465,808 600,947")} stroke="#4fae57" />
      {stations.map(([label, [[x, y]], angle]) => (
        <g key={label} transform={`translate(${x} ${y}) rotate(${angle})`}>
          <rect x="-1.500" y="-4" width="3" height="8" fill="#000" />
          <text x="-3" y="-5" textAnchor="middle" fontSize="10" fill="#cf3038">{label}</text>
        </g>
      ))}
      {callouts.map(([label, [[x, y]], angle]) => (
        <text key={label} transform={`translate(${x} ${y}) rotate(${angle})`} fontSize="8" fill="#3fa548">
          {label}
        </text>
      ))}

      <path d="M400 863V906H446M396 902h8v8h-8z" fill="none" stroke="#222" />
      <path d="M402 846l5 6 5-6M407 852v7M451 894l11 11M462 894l-11 11" fill="none" stroke="#222" />
      <path d="M1638 217h16M1676 217h8M1692 217h8" stroke="#2a62c8" strokeWidth="2" />
      <path d="M1731 217h5" stroke="#189400" strokeWidth="2" />
    </svg>
  );
}

const propertyRows = [
  ["group", "DOCUMENTATION"],
  ["row", "Hyperlink", "", "sheet"],
  ["row", "Notes", "", "sheet"],
  ["row", "Reference documents", "(0)", "sheet"],
  ["group", "PROPERTY SETS"],
  ["set", "Corridor Identity"],
  ["row", "AssemblyHandle", "CA7"],
  ["row", "BaselineGuid", "{593491B6-578E-4DB0-97C..."],
  ["row", "CorridorHandle", "81FB"],
  ["row", "EndStation", "119+40.59'"],
  ["row", "HorizontalBaselineHan...", "81D5"],
  ["row", "OffsetBaselineGuid", "{00000000-0000-0000-0000..."],
  ["row", "RegionGuid", "{FA8D8E13-7D01-48E0-B25..."],
  ["row", "ShapeIndex", "0"],
  ["row", "StartStation", "100+47.21'"],
  ["row", "SubassemblyHandle", "1D9E"],
  ["row", "SubassemblyName", "WB_LANE"],
  ["row", "VerticalBaselineHandle", "81E2"],
  ["set", "Corridor Model Information"],
  ["row", "BaselineName", "BL - Arterial - (1)"],
  ["row", "CorridorDesc", ""],
  ["row", "CorridorName", "ARTERIAL"],
  ["row", "HorizontalBaseline", "Arterial"],
  ["row", "RegionName", "RG - Divided Highway - (3)"],
  ["row", "VerticalBaseline", "Layout (2) (1)"],
  ["set", "Corridor Shape Information"],
  ["row", "AssemblyEndStation", "119+40.59'"],
  ["row", "AssemblyName", "Divided Highway"],
  ["row", "AssemblyStartStation", "100+47.21'"],
  ["row", "ClassificationCode", ""],
  ["row", "CodeName", "Pave1"],
  ["row", "PayItem", ""],
  ["row", "Side", "Left"],
  ["row", "Volume", "38583.7", "bolt"],
];

function PropertyRow({ row }) {
  const [kind, name, value, mark] = row;
  if (kind !== "row") {
    return (
      <tr className={kind === "group" ? "bg-[#363d4d]" : "bg-[#505970]"}>
        <th colSpan={3} className="p-0 pr-[6px] pl-[6px] text-left font-bold text-[#f2f4f7]">
          <span className="flex items-center justify-between">
            {name}
            <Caret className="border-x-[4px] border-t-[4px]" />
          </span>
        </th>
      </tr>
    );
  }
  return (
    <tr>
      <td className="w-[22px] p-0">
        {mark === "bolt" && (
          <svg viewBox="0 0 14 14" className="h-[14px] w-[14px]">
            <path d="M6 1L0 7h4l-1 4 7-6H6z" fill="#f2b632" />
            <circle cx="11" cy="11" r="2.500" fill="#3fae5c" />
          </svg>
        )}
      </td>
      <td className="w-[132px] p-0 whitespace-nowrap text-[#c9cdd5]">{name}</td>
      <td className={`p-0 whitespace-nowrap ${mark === "bolt" ? "text-[#9aa0ab]" : "text-[#e3e6ea]"}`}>
        {mark === "sheet" ? (
          <span className="flex items-center gap-[6px]">
            <svg viewBox="0 0 13 11" className="h-[11px] w-[13px]">
              <path d="M0 0h13v11H0z" fill="#e9ebee" />
              <path d="M2 5h4M7 5h4M2 8h4M7 8h4" stroke="#4a5160" strokeWidth="2" />
            </svg>
            {value}
          </span>
        ) : (
          value
        )}
      </td>
    </tr>
  );
}

function PropertiesPalette() {
  const [tab, setTab] = useState("Extended Data");
  return (
    <div className="absolute top-[3px] right-[3px] bottom-[3px] flex text-[10px]">
      <div className="flex h-[428px] w-[18px] flex-col rounded-l-[3px] bg-[#353b4b] text-[#b9bec8]">
        {[["Design", "h-[109px]"], ["Display", "h-[107px]"], ["Extended Data", "h-[105px]"], ["Object Class", "h-[107px]"]].map(([name, size]) => (
          <button
            key={name}
            onClick={() => setTab(name)}
            className={`${size} flex items-center justify-center ${tab === name ? "bg-[#474f5f] text-[#f0f2f5]" : ""}`}
          >
            <span className="rotate-180 whitespace-nowrap [writing-mode:vertical-rl]">{name}</span>
          </button>
        ))}
      </div>
      <div className="flex rounded-[3px] border-2 border-[#2a2f3d] bg-[#474f5f]">
        <div className="flex w-[337px] flex-col pl-[9px]">
          <div className="mt-[12px] flex h-[19px] items-center text-[#e0e3e8]">
            <button className="flex h-[18px] w-[250px] items-center justify-between bg-[#566073] px-[3px]">
              3D Solid
              <Caret />
            </button>
            <svg viewBox="0 0 16 16" className="ml-[8px] h-4 w-4">
              <path d="M1 3h8v8H1z" fill="#8cc0e8" />
              <path d="M6 7h7v7H6z" fill="#b6d8ef" stroke="#4d83ad" />
              <path d="M12 1v6M9 4h6" stroke="#69c46e" strokeWidth="2" />
            </svg>
            <svg viewBox="0 0 16 16" className="ml-[7px] h-4 w-4">
              <path d="M1 2h12v8H1z" fill="#4fae57" stroke="#cde" strokeDasharray="2 1" />
              <path d="M9 5l6 6h-3l1 4-2 0-1-3-2 1z" fill="#fff" />
            </svg>
            <svg viewBox="0 0 16 16" className="ml-[7px] h-4 w-4">
              <path d="M7 1L3 6h3L4 9l7-5H8z" fill="#f2b632" />
              <path d="M1 6l5 5-3 0-2 3z" fill="#fff" />
              <path d="M6 7h9v8H6z" fill="#eee" />
              <path d="M8 10h2M11 10h2M8 13h2M11 13h2" stroke="#456" />
            </svg>
          </div>
          <table className="mt-[8px] ml-[3px] h-[573px] w-[308px] border-collapse leading-[14px]">
            <tbody>
              {propertyRows.map((row) => (
                <PropertyRow key={row[1]} row={row} />
              ))}
            </tbody>
          </table>
          <svg viewBox="0 0 12 12" className="mt-auto mb-[11px] ml-[31px] h-3 w-3">
            <path d="M0 2h10v7H0z" fill="#e4e4e4" />
            <path d="M6 5l5 6M11 5l-5 6" stroke="#d2485a" strokeWidth="2" />
          </svg>
        </div>
        <div className="flex w-[20px] flex-col items-center bg-[#363c4c] pt-px text-[#e8eaee]">
          <button aria-label="Close palette"><X className="h-[11px] w-[11px]" strokeWidth={4} /></button>
          <button aria-label="Auto-hide" className="mt-[6px] flex h-[10px] items-center gap-[2px]">
            <span className="h-[7px] w-[2px] bg-white" />
            <span className="h-0 w-0 border-y-[3px] border-r-[4px] border-y-transparent border-r-white" />
          </button>
          <button aria-label="Palette options" className="mt-[6px]"><FaCog className="text-[11px]" /></button>
          <span className="mt-auto rotate-180 text-[11px] [writing-mode:vertical-rl]">PROPERTIES</span>
          <Glyph name="calc" className="mt-[10px] h-[14px] w-[14px]" />
        </div>
      </div>
    </div>
  );
}

const sideTools = [
  "dots", "grip", "gripB", "slope", "gripB", "pageGrid", "globeGrid", "globe", "node", "nodeA",
  "nodeCursor", "nodeZoom", "hookDots", "hook", "rule", "nodeCursor", "rule", "hookDots", "nodeZoom", "node",
  "rule", "squareDots", "slope", "gripB", "slope", "roundPen", "pasteSpecial", "hookDots", "dots",
  "nodeCursor", "pageGrid", "node",
];

function SideToolbar() {
  return (
    <div className="flex w-[29px] shrink-0 flex-col items-center bg-[#474f5f] pt-[3px]">
      {sideTools.map((name, i) => {
        if (name === "dots") return <span key={i} className="my-[2px] h-[3px] w-[13px] border-y border-dotted border-[#aab]" />;
        if (name === "rule") return <span key={i} className="my-[4px] h-px w-[18px] bg-[#e4e7ec]" />;
        return (
          <button key={i} aria-label={`${name} ${i}`} className="flex h-[19px] w-[21px] items-center justify-center">
            <Glyph name={name} className="h-4 w-4" />
          </button>
        );
      })}
    </div>
  );
}

function CommandLine() {
  return (
    <div className="flex h-[60px] shrink-0 border-t-4 border-b-4 border-t-[#2f3545] border-b-[#474f5f] bg-[#383e4e] font-['DejaVu_Sans_Mono',monospace] text-[11px]">
      <div className="flex w-[23px] flex-col items-center pt-[3px] text-[#f0f2f5]">
        <span className="h-[4px] w-[16px] border-y-2 border-dotted border-[#c9ccd3]" />
        <button aria-label="Close command line" className="mt-[6px]"><X className="h-[11px] w-[11px]" strokeWidth={4} /></button>
        <button aria-label="Customize" className="mt-[9px]"><FaWrench className="-scale-x-100 text-[13px]" /></button>
      </div>
      <div className="flex flex-1 flex-col bg-white">
        <div className="h-[34px] border-b border-[#999] bg-[#cfcfcf] pt-[5px] pl-[2px] leading-[13px] text-[#222]">
          <p>Command:</p>
          <p>Command: _properties</p>
        </div>
        <label className="flex h-[18px] items-center pl-[4px]">
          <svg viewBox="0 0 14 11" className="h-[11px] w-[14px]" fill="none" stroke="#666">
            <path d="M.5 .5h13v10H.5zM2 3l2 2-2 2M6 8h3" />
          </svg>
          <Caret className="ml-[3px] border-x-[3px] border-t-[4px] text-[#555]" />
          <input
            aria-label="Command"
            placeholder="Type a command"
            className="ml-[7px] flex-1 italic outline-none placeholder:text-[#888]"
          />
        </label>
      </div>
    </div>
  );
}

function StatusBar() {
  const cell = "flex h-full shrink-0 items-center justify-center";
  const stroke = { viewBox: "0 0 16 16", fill: "none", stroke: "#f0f2f5", strokeWidth: "1.500", className: "h-4 w-4" };
  const compass = "M8 1L13 15 8 11 3 15z";
  return (
    <footer className="flex h-[25px] shrink-0 items-stretch bg-[#282c3b] text-[10px] text-[#eceef2]">
      <nav className="flex h-[23px] items-center">
        <button className="ml-[8px] flex h-[20px] w-[62px] items-center justify-center bg-[#474f5f] font-bold [clip-path:polygon(9px_0,100%_0,calc(100%-9px)_100%,0_100%)]">
          Model
        </button>
        <button className="ml-[8px] w-[52px] text-left">Layout1</button>
        <span className="text-[#5c6374]">/</span>
        <button className="ml-[6px] w-[53px] text-left">Layout2</button>
        <span className="text-[#5c6374]">/</span>
        <button aria-label="Add layout" className="ml-[6px]"><Plus className="h-[14px] w-[14px]" strokeWidth={3} /></button>
        <span className="ml-[8px] text-[#5c6374]">/</span>
      </nav>
      <div className="ml-auto flex h-[23px] items-center bg-[#434858] pr-[2px] [&>button]:border-[#2c3040]">
        <button className={`${cell} w-[46px] border-r-2`}>MODEL</button>
        <button aria-label="Grid" className={`${cell} w-[24px]`}><svg {...stroke}><path d="M4 1v14M8 1v14M12 1v14M1 4h14M1 8h14M1 12h14" /></svg></button>
        <button aria-label="Snap" className={`${cell} w-[22px]`}>
          <svg {...stroke}><path d="M2 3h12M2 8h12M2 13h12" strokeDasharray="2 3" strokeWidth="2" /></svg>
        </button>
        <button aria-label="Snap options" className={`${cell} w-[17px] border-r-2`}><Caret /></button>
        <button aria-label="Ortho" className={`${cell} w-[22px] bg-[#5e93cf]`}><svg {...stroke}><path d="M3 2v12h12M3 9h5v5" /></svg></button>
        <button aria-label="Polar" className={`${cell} w-[22px]`}><svg {...stroke}><circle cx="7" cy="9" r="5" /><path d="M7 9h8M7 9l6-7" /></svg></button>
        <button aria-label="Polar options" className={`${cell} w-[17px]`}><Caret /></button>
        <button aria-label="Isometric" className={`${cell} w-[19px]`}><svg {...stroke} strokeWidth="1"><path d="M8 1v14M3 3l9 10" /><path d="M8 1v8" stroke="#7ac47f" /></svg></button>
        <button aria-label="Isometric options" className={`${cell} w-[17px] border-r-2`}><Caret /></button>
        <button aria-label="Tracking" className={`${cell} w-[23px]`}><svg {...stroke}><path d="M14 3L2 13h13" /></svg></button>
        <button aria-label="Object snap" className={`${cell} w-[21px] bg-[#5e93cf]`}><svg {...stroke}><path d="M6 3h8v11H3V6" /><circle cx="4" cy="4" r="2.500" /></svg></button>
        <button aria-label="Object snap options" className={`${cell} w-[18px] border-r-2`}><Caret /></button>
        <button aria-label="Annotation visibility" className={`${cell} w-[21px] bg-[#5e93cf]`}><svg {...stroke}><path d={compass} fill="#fff" stroke="none" /><circle cx="13" cy="4" r="2" /></svg></button>
        <button aria-label="Auto scale" className={`${cell} w-[23px]`}><svg {...stroke}><path d={compass} fill="#fff" stroke="none" /><path d="M14 1l-3 4h3l-2 3" /></svg></button>
        <button aria-label="Annotation scale" className={`${cell} w-[22px]`}><svg {...stroke}><path d={compass} fill="#fff" stroke="none" /></svg></button>
        <button className={`${cell} w-[60px] gap-[3px] border-r-2 whitespace-nowrap`}>1" = 50'<Caret /></button>
        <button aria-label="Workspace" className={`${cell} w-[38px] gap-[8px] border-r-2`}><FaCog className="text-[14px]" /><Caret /></button>
        <button aria-label="Monitor" className={`${cell} w-[24px] border-r-2`}><Plus className="h-[20px] w-[20px]" strokeWidth={2} /></button>
        <button aria-label="Isolate" className={`${cell} w-[26px] border-r-2`}><svg {...stroke} strokeWidth="1.200"><path d="M2 2h5v5H2zM7 15l3-5 3 5z" /><circle cx="13" cy="6" r="2.500" /></svg></button>
        <button className={`${cell} w-[72px] gap-[8px] border-r-2`}>
          <svg viewBox="0 0 16 16" className="h-4 w-4"><path d="M2 5l6-4 6 4-6 3z" fill="#c4c8ce" /><path d="M2 7l6 3 6-3v3l-6 3-6-3z" fill="#6ab3e2" /><path d="M3 12l5 3 5-3-5 2z" fill="#c4c8ce" /></svg>
          3.5000
        </button>
        <button aria-label="Geolocation" className={`${cell} w-[24px] border-r-2`}>
          <svg {...stroke} strokeWidth="2"><path d="M3 4h9M6 1v8M11 2v6" stroke="#6ab3e2" /><path d="M2 9h4v4H2z" stroke="#f2c14e" fill="#f2c14e" /><path d="M8 11l2 3 5-6" stroke="#64bb5c" /></svg>
        </button>
        <button aria-label="Clean screen" className={`${cell} w-[24px]`}><svg {...stroke} strokeWidth="1.200"><path d="M1 3h14v10H1zM4 8v3h3M9 5h3v3" /></svg></button>
        <button aria-label="Customization" className={`${cell} w-[22px]`}><svg {...stroke} strokeWidth="2"><path d="M1 3h14M1 8h14M1 13h14" /></svg></button>
      </div>
    </footer>
  );
}

const App = () => {
  const [menu, setMenu] = useState("Home");
  return (
    <div className="flex h-screen flex-col bg-white px-[69px] pt-[60px] pb-[70px] font-['Open_Sans','Noto_Sans',sans-serif]">
      <div className="flex min-h-0 flex-1 flex-col overflow-hidden rounded-[10px] bg-[#282c3b] shadow-[0_16px_34px_6px_rgba(0,0,0,0.6)] ring-1 ring-[#70747e]">
        <TitleBar />
        <nav className="flex h-[18px] shrink-0 items-stretch gap-px bg-[#282c3b] pl-[3px] text-[11px] leading-[18px] text-[#c8ccd4]">
          {menuTabs.map((name) => (
            <button
              key={name}
              onClick={() => setMenu(name)}
              className={`px-[8px] whitespace-nowrap ${menu === name ? "bg-[#474f5f] text-white" : ""}`}
            >
              {name}
            </button>
          ))}
          <button aria-label="Minimize ribbon" className="ml-[14px] flex items-center gap-[5px]">
            <span className="flex h-[8px] w-[14px] items-center justify-center rounded-[1px] bg-white">
              <span className="h-[2px] w-[4px] bg-[#333]" />
            </span>
            <Caret className="border-x-[2px] border-t-[3px]" />
          </button>
        </nav>
        <Ribbon />
        <DocumentTabs />
        <main className="flex min-h-0 flex-1 border-t-[3px] border-[#474f5f]">
          <Toolspace />
          <div className="flex min-w-0 flex-1 flex-col">
            <div className="flex min-h-0 flex-1">
              <div className="relative min-w-0 flex-1 overflow-hidden">
                <Drawing />
                <p className="absolute top-[5px] left-[4px] text-[10px] text-[#222]">[−][Top][2D Wireframe]</p>
                <PropertiesPalette />
              </div>
              <SideToolbar />
            </div>
            <CommandLine />
          </div>
        </main>
        <StatusBar />
      </div>
    </div>
  );
};

export default App;
